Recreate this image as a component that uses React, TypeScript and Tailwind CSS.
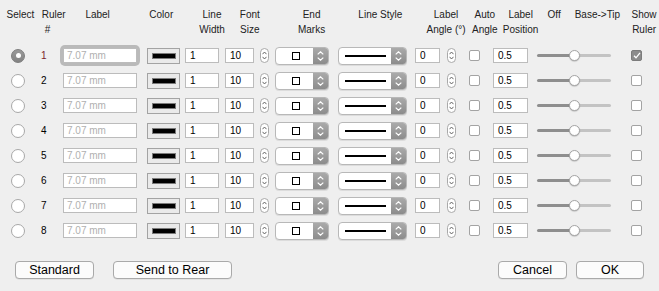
import React from "react";

const rows = [1, 2, 3, 4, 5, 6, 7, 8];

function Stepper() {
  return (
    <div className="w-[9px] h-[15px] rounded-full border border-[#a9a9a9] bg-white flex flex-col items-center justify-center gap-[1px]">
      <svg width="5" height="4" viewBox="0 0 5 4"><path d="M0.5 3.2 L2.5 1 L4.5 3.2" fill="none" stroke="#555" strokeWidth="0.9" /></svg>
      <svg width="5" height="4" viewBox="0 0 5 4"><path d="M0.5 0.8 L2.5 3 L4.5 0.8" fill="none" stroke="#555" strokeWidth="0.9" /></svg>
    </div>
  );
}

function PopupArrows() {
  return (
    <div className="w-[15px] h-full bg-gradient-to-b from-[#aaaaaa] to-[#8c8c8c] flex flex-col items-center justify-center gap-[2px]">
      <svg width="7" height="4" viewBox="0 0 7 4"><path d="M0.7 3.4 L3.5 0.8 L6.3 3.4" fill="none" stroke="#fff" strokeWidth="1.2" /></svg>
      <svg width="7" height="4" viewBox="0 0 7 4"><path d="M0.7 0.6 L3.5 3.2 L6.3 0.6" fill="none" stroke="#fff" strokeWidth="1.2" /></svg>
    </div>
  );
}

function Popup({ w, children }: { w: string; children: React.ReactNode }) {
  return (
    <div className={`${w} h-[18px] rounded-[4px] border border-[#b8b8b8] bg-white flex overflow-hidden shadow-[0_1px_0_rgba(0,0,0,0.08)]`}>
      <div className="flex-1 flex items-center justify-center">{children}</div>
      <PopupArrows />
    </div>
  );
}

function Input({ w, value, placeholder, pl = "pl-[4px]" }: { w: string; value?: string; placeholder?: string; pl?: string }) {
  return (
    <div className={`${w} h-[15px] bg-white border border-[#bcbcbc] flex items-center ${pl} text-[10px] leading-none`}>
      {placeholder ? <span className="text-[#b0b0b0]">{placeholder}</span> : <span className="text-black">{value}</span>}
    </div>
  );
}

function Checkbox({ checked }: { checked?: boolean }) {
  if (checked) {
    return (
      <div className="w-[11px] h-[11px] rounded-[2px] bg-[#8c8c8c] border border-[#7c7c7c] flex items-center justify-center">
        <svg width="8" height="7" viewBox="0 0 8 7"><path d="M1 3.8 L3 5.8 L7 0.8" fill="none" stroke="#fff" strokeWidth="1.3" /></svg>
      </div>
    );
  }
  return <div className="w-[11px] h-[11px] rounded-[2px] bg-white border border-[#a3a3a3]" />;
}

function Radio({ selected }: { selected?: boolean }) {
  if (selected) {
    return (
      <div className="w-[14px] h-[14px] rounded-full bg-gradient-to-b from-[#9a9a9a] to-[#838383] border border-[#7d7d7d] flex items-center justify-center">
        <div className="w-[5px] h-[5px] rounded-full bg-white" />
      </div>
    );
  }
  return <div className="w-[14px] h-[14px] rounded-full bg-white border border-[#a8a8a8]" />;
}

function Slider() {
  return (
    <div className="relative w-[74px] h-[11px] flex items-center">
      <div className="w-[37px] h-[3px] rounded-l-full bg-[#8e8e8e]" />
      <div className="flex-1 h-[3px] rounded-r-full bg-[#c3c3c3]" />
      <div className="absolute left-[32px] top-0 w-[11px] h-[11px] rounded-full bg-white border border-[#a6a6a6] shadow-[0_0.5px_1px_rgba(0,0,0,0.25)]" />
    </div>
  );
}

function ColorWell() {
  return (
    <div className="w-[33px] h-[16px] border border-[#a3a3a3] bg-[#eaeaea] flex items-center justify-center">
      <div className="w-[24px] h-[6px] bg-black border border-[#7a7a7a]" />
    </div>
  );
}

function Row({ n }: { n: number }) {
  const first = n === 1;
  return (
    <div className="flex items-center h-[25px]">
      <div className="ml-[11px]"><Radio selected={first} /></div>
      <div className={`ml-[16px] w-[17px] text-[10px] ${first ? "text-[#7b1c2c]" : "text-black"}`}>{n}</div>
      <div className={`ml-[5px] ${first ? "rounded-[2px] ring-[3px] ring-[#bababa]" : ""}`}>
        <Input w="w-[74px]" placeholder="7.07 mm" pl="pl-[3px]" />
      </div>
      <div className="ml-[10px]"><ColorWell /></div>
      <div className="ml-[5px]"><Input w="w-[34px]" value="1" /></div>
      <div className="ml-[6px]"><Input w="w-[29px]" value="10" /></div>
      <div className="ml-[6px]"><Stepper /></div>
      <div className="ml-[6px]">
        <Popup w="w-[54px]">
          <div className="w-[8px] h-[8px] border border-black ml-[2px]" />
        </Popup>
      </div>
      <div className="ml-[9px]">
        <Popup w="w-[69px]">
          <div className="w-[41px] h-[2px] bg-black" />
        </Popup>
      </div>
      <div className="ml-[8px]"><Input w="w-[25px]" value="0" /></div>
      <div className="ml-[7px]"><Stepper /></div>
      <div className="ml-[13px]"><Checkbox /></div>
      <div className="ml-[13px]"><Input w="w-[35px]" value="0.5" /></div>
      <div className="ml-[9px]"><Slider /></div>
      <div className="ml-[20px]"><Checkbox checked={first} /></div>
    </div>
  );
}

function Btn({ w, label }: { w: string; label: string }) {
  return (
    <div className={`${w} h-[18px] rounded-[4px] border border-[#a9a9a9] bg-[#fbfbfb] flex items-center justify-center text-[12.5px] text-black leading-none shadow-[0_0.5px_0_rgba(0,0,0,0.1)]`}>
      {label}
    </div>
  );
}

export default function App() {
  return (
    <div
      className="w-[659px] h-[291px] bg-[#efefef] overflow-hidden text-[#222222]"
      style={{ fontFamily: '"Liberation Sans", Arial, Helvetica, sans-serif' }}
    >
      <div className="flex items-start pt-[7px] h-[43px] text-[10px] leading-[15px]">
        <div className="w-[41px] text-center">Select</div>
        <div className="w-[24px] pl-[1px]">
          <div>Ruler</div>
          <div className="pl-[3px]">#</div>
        </div>
        <div className="w-[66px] text-center">Label</div>
        <div className="w-[62px] text-center">Color</div>
        <div className="w-[40px] text-center"><div>Line</div><div>Width</div></div>
        <div className="w-[36px] text-center"><div>Font</div><div>Size</div></div>
        <div className="ml-[24px] w-[40px] text-center"><div>End</div><div>Marks</div></div>
        <div className="ml-[19px] w-[60px] text-center">Line Style</div>
        <div className="ml-[12px] w-[48px] text-center whitespace-nowrap"><div>Label</div><div>Angle (°)</div></div>
        <div className="w-[30px] text-center"><div>Auto</div><div>Angle</div></div>
        <div className="w-[42px] text-center"><div>Label</div><div>Position</div></div>
        <div className="ml-[6px] w-[20px]">Off</div>
        <div className="w-[53px] text-right whitespace-nowrap">Base-&gt;Tip</div>
        <div className="ml-[9px] w-[30px] text-center"><div>Show</div><div>Ruler</div></div>
      </div>
      <div className="flex flex-col">
        {rows.map((n) => (
          <Row key={n} n={n} />
        ))}
      </div>
      <div className="flex items-center mt-[18px]">
        <div className="ml-[15px]"><Btn w="w-[79px]" label="Standard" /></div>
        <div className="ml-[19px]"><Btn w="w-[119px]" label="Send to Rear" /></div>
        <div className="ml-auto"><Btn w="w-[69px]" label="Cancel" /></div>
        <div className="ml-[9px] mr-[15px]"><Btn w="w-[68px]" label="OK" /></div>
      </div>
    </div>
  );
}
